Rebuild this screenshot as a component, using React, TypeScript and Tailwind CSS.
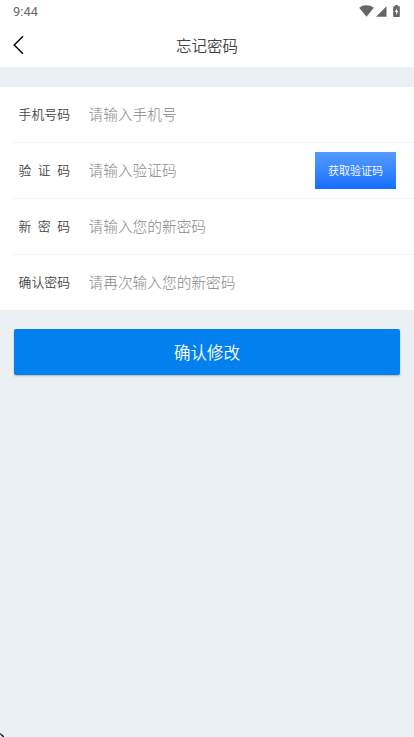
import React, { useState } from "react";

type Field = {
  id: string;
  label: string;
  placeholder: string;
  type: "text" | "tel" | "password";
  hasCode?: boolean;
};

const fields: Field[] = [
  { id: "phone", label: "手机号码", placeholder: "请输入手机号", type: "tel" },
  { id: "code", label: "验证码", placeholder: "请输入验证码", type: "text", hasCode: true },
  { id: "password", label: "新密码", placeholder: "请输入您的新密码", type: "password" },
  { id: "confirm", label: "确认密码", placeholder: "请再次输入您的新密码", type: "password" },
];

const StatusBar: React.FC = () => (
  <div className="h-6 pl-[13px] pr-[14px] flex items-center justify-between text-[#666666]">
    <span className="font-['Roboto',sans-serif] text-[12.8px] leading-6 tracking-[0.1px]">9:44</span>
    <div className="h-6 flex items-start">
      <svg className="mt-[5px]" width="15" height="12" viewBox="0 0 15 12" fill="currentColor">
        <path d="M0.2 2.8C4.2 -0.5 10.8 -0.5 14.8 2.8L7.5 11.8Z" />
      </svg>
      <svg className="mt-[6px] ml-[2px]" width="11" height="11" viewBox="0 0 11 11" fill="currentColor">
        <path d="M10.5 0.3V10.8H0Z" />
      </svg>
      <svg className="mt-[5px] ml-[6px]" width="7" height="12" viewBox="0 0 7 12" fill="currentColor">
        <path
          fillRule="evenodd"
          d="M2.2 0H4.8V1.2H6.2Q6.8 1.2 6.8 1.8V11.4Q6.8 12 6.2 12H0.8Q0.2 12 0.2 11.4V1.8Q0.2 1.2 0.8 1.2H2.2ZM4.1 3L1.8 7H3.1V9.9L5.3 6.1H4.1Z"
        />
      </svg>
    </div>
  </div>
);

const App: React.FC = () => {
  const [values, setValues] = useState<Record<string, string>>({});

  const handleChange = (id: string, value: string) => {
    setValues((prev) => ({ ...prev, [id]: value }));
  };

  return (
    <div className="relative h-screen overflow-hidden bg-[#eaf0f4] font-['Noto_Sans_CJK_SC',sans-serif]">
      {/* Header */}
      <header className="h-[67px] bg-white">
        <StatusBar />
        <div className="h-[42px] grid grid-cols-[60px_1fr_60px] items-center">
          <button className="pl-[13px]" aria-label="返回">
            <svg width="11" height="20" viewBox="0 0 11 20" fill="none" stroke="#000000" strokeWidth="1.4">
              <path d="M10 1.2L1.2 10L10 18.8" />
            </svg>
          </button>
          <h1 className="pb-px text-center text-[15.5px] leading-6 font-[350] text-[#444444]">忘记密码</h1>
        </div>
      </header>

      {/* Form */}
      <div className="mt-[19.5px] bg-white">
        {fields.map((field, index) => (
          <div
            key={field.id}
            className={`ml-[13px] pl-[5.5px] pr-[18px] flex items-center ${
              index < fields.length - 1 ? "h-14 border-b border-[#f5f5f5]" : "h-[55.5px]"
            }`}
          >
            <label
              htmlFor={field.id}
              className="w-[51.5px] flex justify-between shrink-0 text-[12.8px] leading-5 font-[350] text-[#444444]"
            >
              {field.label.split("").map((char) => (
                <span key={char}>{char}</span>
              ))}
            </label>
            <input
              id={field.id}
              type={field.type}
              value={values[field.id] ?? ""}
              placeholder={field.placeholder}
              onChange={(e) => handleChange(field.id, e.target.value)}
              className="ml-[18.5px] flex-1 min-w-0 h-10 pb-px text-[14.7px] font-light outline-none placeholder:text-[#888888]"
            />
            {field.hasCode && (
              <button className="w-[81px] h-[37px] shrink-0 bg-linear-to-b from-[#559bff] to-[#116eff] text-[11px] font-[350] text-white">
                获取验证码
              </button>
            )}
          </div>
        ))}
      </div>

      <div className="px-[14px] pt-[19px]">
        <button className="w-full h-[46px] rounded-[2px] bg-[#0281ee] text-[16.5px] font-[350] text-white shadow-[0_1px_2px_rgba(0,0,0,0.25)]">
          确认修改
        </button>
      </div>

      {/* Corner mark */}
      <svg className="absolute left-0 bottom-0" width="4" height="4" viewBox="0 0 4 4">
        <path d="M0 0V1.2L2.8 4H4V3Z" fill="#111111" />
      </svg>
    </div>
  );
};

export default App;
